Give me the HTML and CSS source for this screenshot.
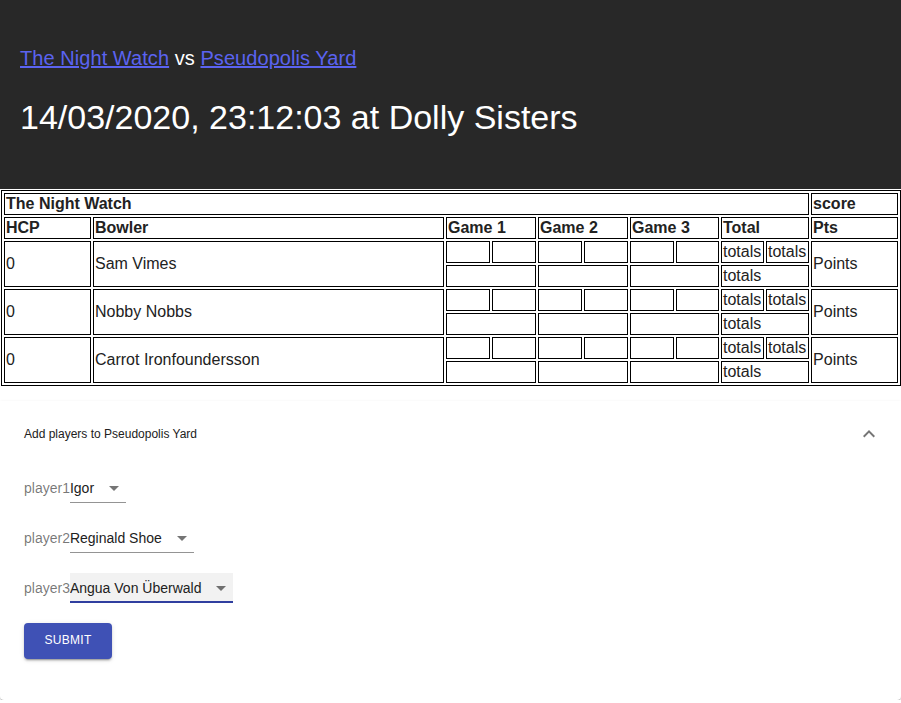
FILE: index.html
```html
<!DOCTYPE html>
<html lang="en">
<head>
<meta charset="utf-8">
<title>The Night Watch vs Pseudopolis Yard</title>
<link rel="stylesheet" href="styles.css">
</head>
<body>
<header class="hero">
  <div class="teams"><a href="#" class="team-link">The Night Watch</a> vs <a href="#" class="team-link">Pseudopolis Yard</a></div>
  <div class="when">14/03/2020, 23:12:03 at Dolly Sisters</div>
</header>

<table class="score">
  <colgroup>
    <col class="c-hcp">
    <col class="c-bowler">
    <col class="c-g44" span="5">
    <col class="c-g43">
    <col class="c-tot" span="2">
    <col class="c-pts">
  </colgroup>
  <tr><th colspan="10">The Night Watch</th><th>score</th></tr>
  <tr><th>HCP</th><th>Bowler</th><th colspan="2">Game 1</th><th colspan="2">Game 2</th><th colspan="2">Game 3</th><th colspan="2">Total</th><th>Pts</th></tr>
  <tr><td rowspan="2">0</td><td rowspan="2">Sam Vimes</td><td></td><td></td><td></td><td></td><td></td><td></td><td>totals</td><td>totals</td><td rowspan="2">Points</td></tr>
  <tr><td colspan="2"></td><td colspan="2"></td><td colspan="2"></td><td colspan="2">totals</td></tr>
  <tr><td rowspan="2">0</td><td rowspan="2">Nobby Nobbs</td><td></td><td></td><td></td><td></td><td></td><td></td><td>totals</td><td>totals</td><td rowspan="2">Points</td></tr>
  <tr><td colspan="2"></td><td colspan="2"></td><td colspan="2"></td><td colspan="2">totals</td></tr>
  <tr><td rowspan="2">0</td><td rowspan="2">Carrot Ironfoundersson</td><td></td><td></td><td></td><td></td><td></td><td></td><td>totals</td><td>totals</td><td rowspan="2">Points</td></tr>
  <tr><td colspan="2"></td><td colspan="2"></td><td colspan="2"></td><td colspan="2">totals</td></tr>
</table>

<section class="panel">
  <div class="summary">
    <span class="summary-text">Add players to Pseudopolis Yard</span>
    <svg class="expand-icon" viewBox="0 0 24 24" width="24" height="24"><path d="M12 8l-6 6 1.41 1.41L12 10.83l4.59 4.58L18 14z"/></svg>
  </div>
  <form class="details">
    <div class="field">
      <span class="label">player1</span>
      <span class="select">Igor<svg class="arrow" viewBox="0 0 24 24" width="24" height="24"><path d="M7 10l5 5 5-5z"/></svg></span>
    </div>
    <div class="field">
      <span class="label">player2</span>
      <span class="select">Reginald Shoe<svg class="arrow" viewBox="0 0 24 24" width="24" height="24"><path d="M7 10l5 5 5-5z"/></svg></span>
    </div>
    <div class="field">
      <span class="label">player3</span>
      <span class="select focused">Angua Von Überwald<svg class="arrow" viewBox="0 0 24 24" width="24" height="24"><path d="M7 10l5 5 5-5z"/></svg></span>
    </div>
    <div class="actions"><button type="button" class="submit">SUBMIT</button></div>
  </form>
</section>
</body>
</html>
```

FILE: styles.css
```css
html, body {
  margin: 0;
  padding: 0;
  background: #ffffff;
  font-family: "Liberation Sans", Arial, sans-serif;
}

.hero {
  box-sizing: border-box;
  height: 189px;
  background: #282828;
  color: #ffffff;
  padding: 42px 20px 0;
  display: flex;
  flex-direction: column;
  gap: 22px;
}

.teams {
  font-size: 20px;
  line-height: 32px;
  letter-spacing: 0.06px;
}

.team-link {
  color: #5b63f0;
  text-decoration: underline;
}

.when {
  font-size: 34px;
  line-height: 42px;
}

.score {
  table-layout: fixed;
  width: 900px;
  margin: 1px 0 0 1px;
  border: 1px solid #000;
  border-spacing: 2px;
  font-size: 16px;
  color: #222;
}

.score th,
.score td {
  border: 1px solid #000;
  padding: 1px;
  text-align: left;
  white-space: nowrap;
  overflow: hidden;
}

.score th { font-weight: bold; }

.c-hcp { width: 87px; }
.c-bowler { width: 351px; }
.c-g44 { width: 44px; }
.c-g43 { width: 43px; }
.c-tot { width: 43px; }
.c-pts { width: 87px; }

.panel {
  margin-top: 15px;
  background: #fff;
  border-radius: 0 0 4px 4px;
  box-shadow: 0 2px 1px -1px rgba(0,0,0,0.2), 0 1px 1px 0 rgba(0,0,0,0.14), 0 1px 3px 0 rgba(0,0,0,0.12);
}

.summary {
  box-sizing: border-box;
  height: 64px;
  padding: 1px 20px 0 24px;
  display: flex;
  align-items: center;
  justify-content: space-between;
}

.summary-text {
  font-size: 12px;
  color: #212121;
}

.expand-icon {
  fill: rgba(0,0,0,0.54);
}

.details {
  padding: 8px 24px 41px;
  display: flex;
  flex-direction: column;
  align-items: flex-start;
  gap: 20px;
}

.field {
  display: flex;
  align-items: center;
  font-size: 14px;
}

.label {
  color: rgba(0,0,0,0.54);
}

.select {
  position: relative;
  box-sizing: border-box;
  height: 30px;
  padding: 7px 32px 0 0;
  line-height: 17px;
  color: #212121;
  border-bottom: 1px solid rgba(0,0,0,0.42);
}

.select.focused {
  background: rgba(0,0,0,0.05);
  border-bottom: 2px solid #303f9f;
}

.arrow {
  position: absolute;
  right: 0;
  top: 3px;
  fill: rgba(0,0,0,0.54);
}

.submit {
  width: 88px;
  height: 36px;
  padding: 0 0 2px;
  border: 0;
  border-radius: 4px;
  background: #3f51b5;
  color: #fff;
  font-family: "Liberation Sans", Arial, sans-serif;
  font-size: 12px;
  letter-spacing: 0.3px;
  box-shadow: 0 3px 1px -2px rgba(0,0,0,0.2), 0 2px 2px 0 rgba(0,0,0,0.14), 0 1px 5px 0 rgba(0,0,0,0.12);
  cursor: pointer;
}
```
